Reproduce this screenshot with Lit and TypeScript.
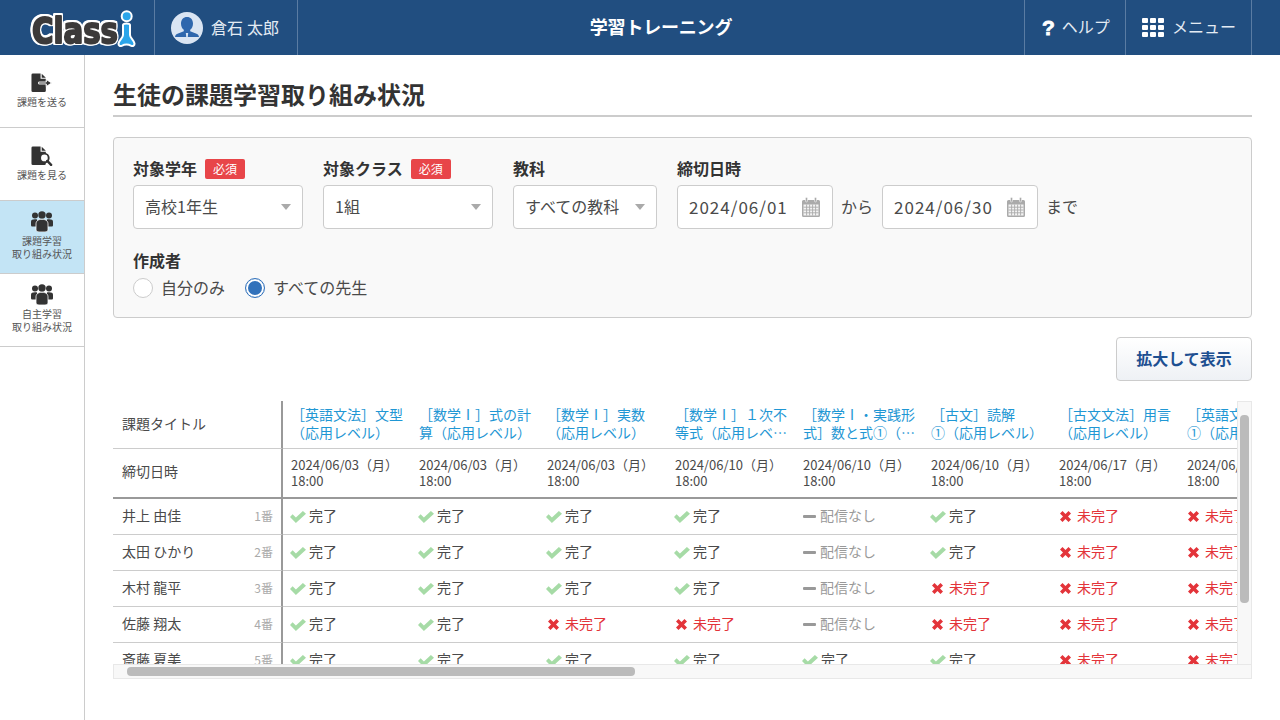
import { LitElement, css, html, svg } from 'lit'
import { customElement } from 'lit/decorators.js'

type Status = 'done' | 'todo' | 'none'

const d: Status = 'done'
const t: Status = 'todo'
const n: Status = 'none'

const columns = [
  { title: ['［英語文法］文型', '（応用レベル）'], date: '2024/06/03（月）' },
  { title: ['［数学Ⅰ］式の計', '算（応用レベル）'], date: '2024/06/03（月）' },
  { title: ['［数学Ⅰ］実数', '（応用レベル）'], date: '2024/06/03（月）' },
  { title: ['［数学Ⅰ］１次不', '等式（応用レベ…'], date: '2024/06/10（月）' },
  { title: ['［数学Ⅰ・実践形', '式］数と式①（…'], date: '2024/06/10（月）' },
  { title: ['［古文］読解', '①（応用レベル）'], date: '2024/06/10（月）' },
  { title: ['［古文文法］用言', '（応用レベル）'], date: '2024/06/17（月）' },
  { title: ['［英語文法］時制', '①（応用レベル）'], date: '2024/06/17（月）' },
]

const students: { name: string; no: string; marks: Status[] }[] = [
  { name: '井上 由佳', no: '1番', marks: [d, d, d, d, n, d, t, t] },
  { name: '太田 ひかり', no: '2番', marks: [d, d, d, d, n, d, t, t] },
  { name: '木村 龍平', no: '3番', marks: [d, d, d, d, n, t, t, t] },
  { name: '佐藤 翔太', no: '4番', marks: [d, d, t, t, n, t, t, t] },
  { name: '斎藤 夏美', no: '5番', marks: [d, d, d, d, d, d, t, t] },
]

const fileShape = svg`<path d="M1 0h8v5.500h5.500V18a1.500 1.500 0 0 1-1.500 1.500H1A1.500 1.500 0 0 1-.5 18V1.500A1.500 1.500 0 0 1 1 0zM10.200 .2l4.300 4.300h-4.300z" />`

const sendIcon = html`<svg class="nav-icon" width="22" height="20" viewBox="-1 0 23 20" fill="#333">
  ${fileShape}
  <path d="M7 9h8V6.300l5.500 3.700-5.500 3.700V11H7z" stroke="#fff" stroke-width="1" />
</svg>`

const searchIcon = html`<svg class="nav-icon" width="22" height="20" viewBox="-1 0 23 20" fill="#333">
  ${fileShape}
  <circle cx="13" cy="12" r="4.500" fill="#fff" stroke="#333" stroke-width="2" />
  <path d="M16 15.200l4 4" stroke="#333" stroke-width="2.600" stroke-linecap="round" />
</svg>`

const usersIcon = html`<svg class="nav-icon" width="22" height="21" viewBox="0 0 22 21" fill="#333">
  <circle cx="4" cy="4.500" r="3" />
  <circle cx="18" cy="4.500" r="3" />
  <circle cx="11" cy="4" r="3.700" />
  <path d="M0 10.500C0 9 1.500 8.200 4 8.200c1 0 1.600.2 2 .4v6.900H1.500C.5 15.500 0 15 0 14z" />
  <path d="M22 10.500C22 9 20.500 8.200 18 8.200c-1 0-1.600.2-2 .4v6.900h4.500c1 0 1.500-.5 1.500-1.500z" />
  <path d="M11 8.300c3.800 0 6 1.700 6 4.500v5.500c0 1.700-1 2.700-3 2.700H8c-2 0-3-1-3-2.700v-5.500c0-2.800 2.200-4.500 6-4.500z" stroke="#fff" stroke-width=".8" />
</svg>`

const calendarIcon = html`<svg class="calendar" width="18" height="20" viewBox="0 0 18 20">
  <path d="M1.500 3h15A1.500 1.500 0 0 1 18 4.500v14a1.500 1.500 0 0 1-1.500 1.500h-15A1.500 1.500 0 0 1 0 18.500v-14A1.500 1.500 0 0 1 1.500 3z" fill="#aaa" />
  <path d="M1.500 7.500h15V18.500h-15z" fill="#f4f4f4" />
  <path d="M1.500 10.200h15M1.500 13h15M1.500 15.800h15M4.600 7.500v11M7.600 7.500v11M10.600 7.500v11M13.600 7.500v11" stroke="#aaa" stroke-width=".9" fill="none" />
  <rect x="3.500" y=".5" width="2" height="4.500" rx="1" fill="#aaa" stroke="#f4f4f4" stroke-width=".6" />
  <rect x="12.500" y=".5" width="2" height="4.500" rx="1" fill="#aaa" stroke="#f4f4f4" stroke-width=".6" />
</svg>`

const checkIcon = html`<svg width="16" height="12" viewBox="0 0 16 12" fill="#a6dba6">
  <path d="M0 6l2.600-2.700 3.300 3.100L12.900 0 16 2.800 5.900 12z" />
</svg>`

const crossIcon = html`<svg class="cross" width="11" height="11" viewBox="0 0 11 11" fill="#e3343a">
  <path d="M2.500 0L5.500 3 8.500 0 11 2.500 8 5.500l3 3L8.500 11l-3-3-3 3L0 8.500l3-3-3-3z" />
</svg>`

const dashIcon = html`<svg class="dash" width="13" height="3" viewBox="0 0 13 3"><rect width="13" height="3" rx="1" fill="#999" /></svg>`

@customElement('app-root')
export class AppRoot extends LitElement {
  render() {
    return html`
      <header class="topbar">
        <div class="logo">${this.renderLogo()}</div>
        <div class="user">
          <svg width="32" height="32" viewBox="0 0 32 32">
            <circle cx="16" cy="16" r="16" fill="#dae5f3" />
            <path d="M16 5c3.600 0 6 2.700 6 6.500 0 2.600-1.100 5-2.800 6.300v1.400l6.300 2.500c1.600.7 2.300 1.800 2.500 3.300H4c.2-1.500.9-2.600 2.500-3.300l6.300-2.500v-1.400C11.100 16.500 10 14.100 10 11.500 10 7.700 12.400 5 16 5z" fill="#2f67ad" />
            <path d="M14.800 21h2.400l-.5 4.300h-1.400z" fill="#dae5f3" />
          </svg>
          <span>倉石 太郎</span>
        </div>
        <div class="app-title">学習トレーニング</div>
        <div class="tool help"><span class="mark">?</span><span class="tool-text">ヘルプ</span></div>
        <div class="tool menu">
          <span class="grid">${Array.from({ length: 9 }, () => html`<i></i>`)}</span>
          <span class="tool-text">メニュー</span>
        </div>
      </header>

      <div class="body">
        <nav class="side">
          <a class="item">${sendIcon}<span>課題を送る</span></a>
          <a class="item">${searchIcon}<span>課題を見る</span></a>
          <a class="item two active">${usersIcon}<span>課題学習<br />取り組み状況</span></a>
          <a class="item two">${usersIcon}<span>自主学習<br />取り組み状況</span></a>
        </nav>

        <main class="main">
          <h1>生徒の課題学習取り組み状況</h1>

          <section class="panel">
            <div class="fields">
              <div class="field">
                <div class="label"><span>対象学年</span><em>必須</em></div>
                <div class="select w170"><span>高校1年生</span></div>
              </div>
              <div class="field">
                <div class="label"><span>対象クラス</span><em>必須</em></div>
                <div class="select w170"><span>1組</span></div>
              </div>
              <div class="field">
                <div class="label"><span>教科</span></div>
                <div class="select w144"><span>すべての教科</span></div>
              </div>
              <div class="field">
                <div class="label"><span>締切日時</span></div>
                <div class="range">
                  <div class="date"><span>2024/06/01</span>${calendarIcon}</div>
                  <span class="word">から</span>
                  <div class="date"><span>2024/06/30</span>${calendarIcon}</div>
                  <span class="word">まで</span>
                </div>
              </div>
            </div>
            <div class="author">
              <div class="label"><span>作成者</span></div>
              <div class="radios">
                <label><i class="radio"></i><span>自分のみ</span></label>
                <label><i class="radio on"></i><span>すべての先生</span></label>
              </div>
            </div>
          </section>

          <div class="actions"><button class="zoom"><span>拡大して表示</span></button></div>

          <div class="frame">
            <div class="viewport">
              <table>
                <thead>
                  <tr class="titles">
                    <th class="head">課題タイトル</th>
                    ${columns.map(c => html`<td><a>${c.title[0]}<br />${c.title[1]}</a></td>`)}
                  </tr>
                  <tr class="dates">
                    <th class="head">締切日時</th>
                    ${columns.map(c => html`<td>${c.date}<br />18:00</td>`)}
                  </tr>
                </thead>
                <tbody>
                  ${students.map(s => html`
                    <tr>
                      <th class="head"><div class="student"><span>${s.name}</span><small>${s.no}</small></div></th>
                      ${s.marks.map(m => this.renderMark(m))}
                    </tr>
                  `)}
                </tbody>
              </table>
            </div>
            <div class="track vertical"><div class="thumb"></div></div>
            <div class="track horizontal"><div class="thumb"></div></div>
          </div>
        </main>
      </div>
    `
  }

  private renderLogo() {
    return html`<svg width="112" height="42" viewBox="0 0 112 42">
      <text class="logo-text" x="5" y="36" textLength="86" lengthAdjust="spacingAndGlyphs">Class</text>
      <circle cx="99.700" cy="9.200" r="5" fill="#2ba5ea" stroke="#fff" stroke-width="2" />
      <path d="M96 18q0-1.500 3.500-1.500t3.500 1.500V28c0 3 4 5 4.500 8.500.2 2-1.500 3-3.200 2.300-1.500-.7-2.800-1.200-4.800-1.200s-3.300.5-4.800 1.200c-1.700.7-3.400-.3-3.200-2.300.5-3.500 4.500-5.500 4.500-8.500z"
        fill="#2ba5ea" stroke="#fff" stroke-width="2" stroke-linejoin="round" />
    </svg>`
  }

  private renderMark(status: Status) {
    if (status === 'done') {
      return html`<td><div class="mark-cell">${checkIcon}<span>完了</span></div></td>`
    }
    if (status === 'todo') {
      return html`<td><div class="mark-cell red">${crossIcon}<span>未完了</span></div></td>`
    }
    return html`<td><div class="mark-cell gray">${dashIcon}<span>配信なし</span></div></td>`
  }

  static styles = css`
    :host {
      display: block;
      height: 720px;
      overflow: hidden;
      background: #fff;
      color: #333;
      font-family: "Noto Sans CJK JP", "Noto Sans", sans-serif;
    }
    * {
      box-sizing: border-box;
    }

    .topbar {
      display: flex;
      align-items: stretch;
      height: 55px;
      padding-right: 28px;
      background: #214e80;
      color: #fff;
    }
    .logo {
      display: flex;
      align-items: center;
      width: 155px;
      padding-left: 27px;
      border-right: 1px solid #5a7ca3;
    }
    .logo-text {
      font-family: "DejaVu Sans", sans-serif;
      font-size: 35px;
      font-weight: 700;
      fill: #3c3a3a;
      stroke: #3c3a3a;
      stroke-width: 2px;
      stroke-linejoin: round;
      filter: drop-shadow(1.500px 0 0 #fff) drop-shadow(-1.500px 0 0 #fff) drop-shadow(0 1.500px 0 #fff) drop-shadow(0 -1.500px 0 #fff);
    }
    .user {
      display: flex;
      align-items: center;
      gap: 8px;
      width: 143px;
      padding-left: 16px;
      border-right: 1px solid #5a7ca3;
      color: #e4ebf3;
      font-size: 16px;
      letter-spacing: 0.1px;
    }
    .user span {
      margin-bottom: 2px;
    }
    .app-title {
      flex: 1;
      align-self: center;
      padding-bottom: 4px;
      font-size: 18px;
      font-weight: 700;
      text-align: center;
      letter-spacing: -0.2px;
    }
    .tool {
      display: flex;
      align-items: center;
      border-left: 1px solid #5a7ca3;
      color: #e4ebf3;
      font-size: 16px;
    }
    .tool-text {
      margin-bottom: 4px;
    }
    .help {
      gap: 7px;
      width: 101px;
      padding-left: 17px;
    }
    .menu {
      gap: 8px;
      width: 127px;
      padding-left: 16px;
      border-right: 1px solid #5a7ca3;
    }
    .mark {
      color: #fff;
      font-family: "Liberation Sans", sans-serif;
      font-size: 21px;
      font-weight: 700;
      line-height: 1;
      -webkit-text-stroke: 0.8px #fff;
    }
    .grid {
      display: grid;
      grid-template-columns: repeat(3, 6px);
      grid-auto-rows: 5px;
      gap: 2px;
    }
    .grid i {
      background: #fff;
      border-radius: 1px;
    }

    .body {
      display: flex;
      height: 665px;
    }
    .side {
      flex: none;
      width: 85px;
      border-right: 1px solid #ccc;
    }
    .item {
      display: flex;
      flex-direction: column;
      align-items: center;
      height: 73px;
      padding-top: 18px;
      border-bottom: 1px solid #ccc;
      color: #555;
      font-size: 10px;
      line-height: 13px;
      text-align: center;
    }
    .item span {
      margin-top: 2px;
    }
    .item.two {
      padding-top: 10px;
    }
    .item.active {
      background: #c3e4f5;
    }
    .nav-icon {
      display: block;
      flex: none;
    }

    .main {
      flex: 1;
      min-width: 0;
      padding: 0 28px;
    }
    h1 {
      height: 62px;
      margin: 0 0 20px;
      padding-top: 23px;
      border-bottom: 2px solid #ccc;
      font-size: 24px;
      font-weight: 700;
      line-height: 32px;
    }

    .panel {
      height: 181px;
      padding: 21px 19px 0;
      border: 1px solid #ccc;
      border-radius: 4px;
      background: #f9f9f9;
    }
    .fields {
      display: flex;
      gap: 20px;
    }
    .label {
      display: flex;
      align-items: center;
      height: 20px;
      margin-bottom: 6px;
      font-size: 16px;
      font-weight: 700;
      line-height: 20px;
    }
    .label span {
      margin-bottom: 2px;
    }
    .label em {
      width: 40px;
      height: 20px;
      margin-left: 8px;
      border-radius: 2px;
      background: #e84549;
      color: #fff;
      font-size: 12px;
      font-style: normal;
      font-weight: 400;
      line-height: 20px;
      text-align: center;
    }
    .select,
    .date {
      position: relative;
      display: flex;
      align-items: center;
      height: 44px;
      border: 1px solid #ccc;
      border-radius: 4px;
      background: #fff;
      font-size: 16px;
      color: #4a4a4a;
    }
    .select span,
    .date span,
    .word {
      margin-bottom: 2px;
    }
    .select {
      padding-left: 11px;
    }
    .select::after {
      content: '';
      position: absolute;
      top: 18px;
      right: 11px;
      border-style: solid;
      border-width: 6px 5px 0;
      border-color: #aaa transparent transparent;
    }
    .w170 {
      width: 170px;
    }
    .w144 {
      width: 144px;
    }
    .range {
      display: flex;
      align-items: center;
      gap: 8px;
      font-size: 16px;
      color: #4a4a4a;
    }
    .date {
      justify-content: space-between;
      width: 156px;
      padding: 0 12px 0 11px;
      font-size: 17px;
      letter-spacing: 1px;
    }
    .range .word + .date {
      margin-left: 1px;
    }
    .author {
      margin-top: 22px;
    }
    .radios {
      display: flex;
      gap: 20px;
      font-size: 16px;
      color: #4a4a4a;
      line-height: 20px;
    }
    .radios label {
      display: flex;
      align-items: center;
      gap: 8px;
    }
    .radios span {
      margin-bottom: 2px;
    }
    .radio {
      width: 20px;
      height: 20px;
      border: 1px solid #ccc;
      border-radius: 50%;
      background: #fff;
    }
    .radio.on {
      border-color: #3272bb;
      box-shadow: inset 0 0 0 2px #fff, inset 0 0 0 10px #3272bb;
    }

    .actions {
      display: flex;
      justify-content: flex-end;
      margin: 19px 0 20px;
    }
    .zoom {
      width: 136px;
      height: 44px;
      padding: 0 0 3px;
      border: 1px solid #ccc;
      border-radius: 4px;
      background: linear-gradient(#fff, #eef1f5);
      color: #1d4f91;
      font-family: inherit;
      font-size: 16px;
      font-weight: 700;
    }

    .frame {
      display: grid;
      grid-template-columns: 1fr 15px;
      grid-template-rows: 263px 15px;
    }
    .viewport {
      overflow: hidden;
    }
    .track {
      border: 1px solid #e8e8e8;
      background: #f8f8f8;
    }
    .track .thumb {
      border-radius: 4px;
      background: #bbb;
    }
    .track.vertical {
      padding: 13px 2px 0;
      border-bottom: none;
    }
    .vertical .thumb {
      width: 9px;
      height: 188px;
    }
    .track.horizontal {
      grid-column: 1 / 3;
      padding: 2px 13px;
    }
    .horizontal .thumb {
      width: 508px;
      height: 9px;
    }

    table {
      width: 1194px;
      border-collapse: separate;
      border-spacing: 0;
      table-layout: fixed;
      font-size: 14px;
    }
    th,
    td {
      padding: 0;
      border-bottom: 1px solid #ccc;
      background: #fff;
      font-weight: 400;
      text-align: left;
    }
    td {
      width: 128px;
    }
    .head {
      width: 170px;
      padding: 0 8px 4px 9px;
      border-right: 2px solid #999;
      color: #4a4a4a;
    }
    .titles {
      height: 48px;
    }
    .titles td {
      padding: 0 0 4px 8px;
      line-height: 18px;
      white-space: nowrap;
    }
    .titles a {
      color: #1f97d4;
    }
    .dates {
      height: 50px;
    }
    .dates th,
    .dates td {
      border-bottom: 2px solid #999;
    }
    .dates td {
      padding-left: 8px;
      font-size: 13px;
      line-height: 16px;
      color: #4a4a4a;
      white-space: nowrap;
    }
    tbody tr {
      height: 36px;
    }
    .student {
      display: flex;
      align-items: baseline;
      justify-content: space-between;
    }
    small {
      color: #aaa;
      font-size: 12px;
    }
    .mark-cell {
      display: flex;
      align-items: center;
      gap: 3px;
      padding-left: 7px;
      color: #4a4a4a;
    }
    .mark-cell span {
      margin-bottom: 4px;
    }
    .mark-cell.red {
      color: #e3343a;
    }
    .mark-cell.gray {
      color: #999;
    }
    .cross {
      margin: 0 3px 0 2px;
    }
    .dash {
      margin: 0 1px 0 1px;
    }
  `
}
